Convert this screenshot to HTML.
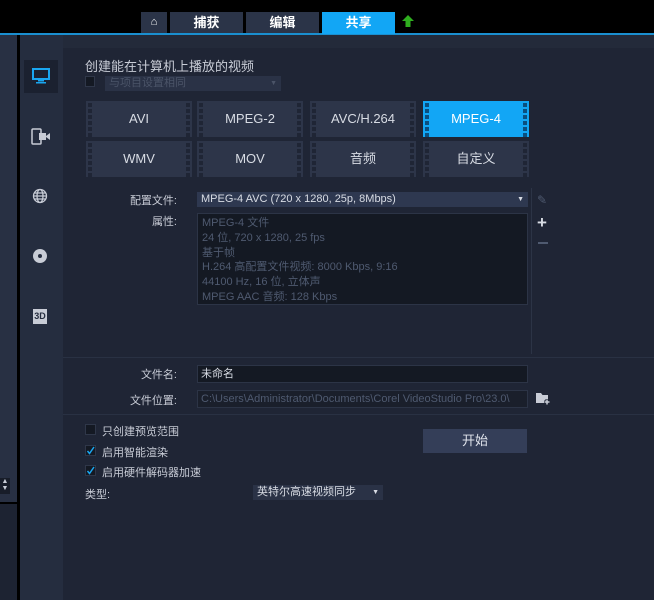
<!DOCTYPE html>
<html><head><meta charset="utf-8"><style>
*{margin:0;padding:0;box-sizing:border-box}
body{width:654px;height:600px;background:#1f2535;position:relative;overflow:hidden;font-family:"Liberation Sans","Noto Sans CJK SC",sans-serif;font-size:11px;color:#c8ccd6}
.a{position:absolute}
.tab{position:absolute;top:12px;height:21px;background:#2b3448;color:#fff;font-weight:bold;font-size:13px;text-align:center;line-height:21px}
.btn{position:absolute;width:106px;height:36px;background:#2d3549;color:#d8dce4;font-size:13px;text-align:center;line-height:36px}
.btn::before,.btn::after{content:"";position:absolute;top:0;width:4px;height:36px;background:repeating-linear-gradient(to bottom,#2d3549 0 2px,#1f2535 2px 6px)}
.btn::before{left:2px}.btn::after{right:2px}
.btn.sel{background:#12a6f5;color:#fff}
.btn.sel::before,.btn.sel::after{background:repeating-linear-gradient(to bottom,#12a6f5 0 2px,#0a4f80 2px 6px)}
.lbl{position:absolute;text-align:right;width:100px;color:#c8ccd6}
.box{position:absolute;left:197px;width:331px;background:#141923;border:1px solid #2c3446}
.cb{position:absolute;left:85px;width:11px;height:11px;background:#141923;border:1px solid #2f3749}
</style></head><body>
<div class="a" style="left:0;top:0;width:654px;height:33px;background:#000"></div>
<div class="a" style="left:0;top:33px;width:654px;height:2px;background:#1a8fd0"></div>
<div class="a" style="left:0;top:35px;width:654px;height:13px;background:#232a3a"></div>
<div class="tab" style="left:141px;width:26px;font-size:11px">⌂</div>
<div class="tab" style="left:170px;width:73px">捕获</div>
<div class="tab" style="left:246px;width:73px">编辑</div>
<div class="tab" style="left:322px;width:73px;background:#12a6f5;height:22px">共享</div>
<svg class="a" style="left:401px;top:14px" width="14" height="14"><path d="M7 1L13 7H9.5V13H4.5V7H1Z" fill="#2fae1f"/></svg>
<div class="a" style="left:0;top:35px;width:17px;height:565px;background:#283043"></div>
<div class="a" style="left:17px;top:35px;width:3px;height:565px;background:#000"></div>
<div class="a" style="left:0;top:502px;width:17px;height:2px;background:#000"></div>
<div class="a" style="left:0;top:504px;width:17px;height:96px;background:#1d2332"></div>
<div class="a" style="left:0;top:478px;width:10px;height:16px;background:#181d29;color:#c8ccd6;font-size:7px;line-height:7px;text-align:center">▲<br>▼</div>
<div class="a" style="left:20px;top:35px;width:43px;height:565px;background:#252d3f"></div>
<div class="a" style="left:24px;top:60px;width:34px;height:33px;background:#1b2130"></div>
<svg class="a" style="left:32px;top:68px" width="18" height="16"><rect x="1" y="1" width="16" height="10" fill="none" stroke="#1aa6f0" stroke-width="2"/><rect x="6" y="12" width="6" height="1.5" fill="#1aa6f0"/><rect x="4" y="14" width="10" height="1.5" fill="#1aa6f0"/></svg>
<svg class="a" style="left:31px;top:128px" width="20" height="18"><rect x="1" y="1" width="9" height="15" rx="1" fill="none" stroke="#c8ccd6" stroke-width="1.5"/><rect x="8" y="5" width="7" height="7" fill="#c8ccd6"/><path d="M15 8L19 5V12L15 9Z" fill="#c8ccd6"/></svg>
<svg class="a" style="left:32px;top:188px" width="16" height="16"><g fill="none" stroke="#c8ccd6" stroke-width="1.3"><circle cx="8" cy="8" r="6.5"/><ellipse cx="8" cy="8" rx="3" ry="6.5"/><path d="M1.5 8H14.5M2.5 5H13.5M2.5 11H13.5"/></g></svg>
<svg class="a" style="left:32px;top:248px" width="16" height="16"><circle cx="8" cy="8" r="7" fill="#c8ccd6"/><circle cx="8" cy="8" r="2" fill="#252d3f"/></svg>
<div class="a" style="left:33px;top:309px;width:14px;height:15px;background:#c8ccd6;color:#252d3f;font-size:9px;font-weight:bold;line-height:15px;text-align:center">3D</div>
<div class="a" style="left:85px;top:56px;font-size:13px;color:#c8ccd6">创建能在计算机上播放的视频</div>
<div class="cb" style="top:76px;width:10px;height:11px"></div>
<div class="a" style="left:105px;top:76px;width:176px;height:15px;background:#2a3246;color:#4b5468;font-size:11px;line-height:15px;padding-left:4px">与项目设置相同<span style="position:absolute;right:4px;font-size:7px">▼</span></div>
<div class="btn" style="left:86px;top:101px">AVI</div>
<div class="btn" style="left:197px;top:101px">MPEG-2</div>
<div class="btn" style="left:310px;top:101px">AVC/H.264</div>
<div class="btn sel" style="left:423px;top:101px">MPEG-4</div>
<div class="btn" style="left:86px;top:141px">WMV</div>
<div class="btn" style="left:197px;top:141px">MOV</div>
<div class="btn" style="left:310px;top:141px">音频</div>
<div class="btn" style="left:423px;top:141px">自定义</div>
<div class="lbl" style="left:77px;top:192px">配置文件:</div>
<div class="lbl" style="left:77px;top:213px">属性:</div>
<div class="a" style="left:197px;top:192px;width:331px;height:15px;background:#2e3850;color:#d8dce4;line-height:15px;padding-left:4px">MPEG-4 AVC (720 x 1280, 25p, 8Mbps)<span style="position:absolute;right:4px;font-size:7px">▼</span></div>
<div class="box" style="top:213px;height:92px;color:#4f5a70;padding:2px 4px;line-height:14.8px">MPEG-4 文件<br>24 位, 720 x 1280, 25 fps<br>基于帧<br>H.264 高配置文件视频: 8000 Kbps, 9:16<br>44100 Hz, 16 位, 立体声<br>MPEG AAC 音频: 128 Kbps</div>
<div class="a" style="left:531px;top:188px;width:1px;height:166px;background:#2c3446"></div>
<div class="a" style="left:537px;top:193px;color:#4f5a70;font-size:12px">✎</div>
<div class="a" style="left:537px;top:213px;color:#d8dce4;font-size:17px;font-weight:bold">+</div>
<div class="a" style="left:538px;top:242px;width:10px;height:2px;background:#4f5a70"></div>
<div class="a" style="left:63px;top:357px;width:591px;height:1px;background:#293143"></div>
<div class="lbl" style="left:77px;top:366px">文件名:</div>
<div class="box" style="top:365px;height:18px;color:#d8dce4;line-height:16px;padding-left:3px">未命名</div>
<div class="lbl" style="left:77px;top:392px">文件位置:</div>
<div class="box" style="top:390px;height:18px;color:#4f5a70;line-height:16px;padding-left:3px;background:#1a1f2b">C:\Users\Administrator\Documents\Corel VideoStudio Pro\23.0\</div>
<svg class="a" style="left:535px;top:391px" width="16" height="14"><path d="M1 2H6L7.5 4H13V12H1Z" fill="#c8ccd6"/><path d="M12 8V14M9 11H15" stroke="#1f2535" stroke-width="3"/><path d="M12 8.5V13.5M9.5 11H14.5" stroke="#c8ccd6" stroke-width="1.5"/></svg>
<div class="a" style="left:63px;top:414px;width:591px;height:1px;background:#293143"></div>
<div class="cb" style="top:424px"></div>
<div class="a" style="left:102px;top:423px">只创建预览范围</div>
<div class="cb" style="top:445px"><svg width="9" height="9" style="display:block"><path d="M1.5 5L3.5 7.5L8 1" stroke="#1aa6f0" stroke-width="1.5" fill="none"/></svg></div>
<div class="a" style="left:102px;top:444px">启用智能渲染</div>
<div class="cb" style="top:465px"><svg width="9" height="9" style="display:block"><path d="M1.5 5L3.5 7.5L8 1" stroke="#1aa6f0" stroke-width="1.5" fill="none"/></svg></div>
<div class="a" style="left:102px;top:464px">启用硬件解码器加速</div>
<div class="a" style="left:85px;top:486px">类型:</div>
<div class="a" style="left:253px;top:485px;width:130px;height:15px;background:#2a3246;color:#d8dce4;line-height:15px;padding-left:4px">英特尔高速视频同步<span style="position:absolute;right:4px;font-size:7px">▼</span></div>
<div class="a" style="left:423px;top:429px;width:104px;height:24px;background:#343e58;color:#e0e4ec;font-size:13px;text-align:center;line-height:24px">开始</div>
</body></html>
